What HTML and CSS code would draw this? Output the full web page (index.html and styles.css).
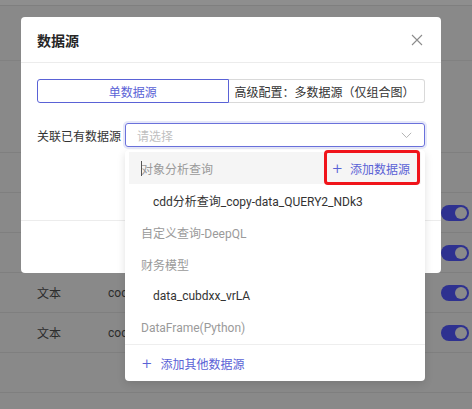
FILE: index.html
```html
<!DOCTYPE html>
<html lang="zh">
<head>
<meta charset="utf-8">
<link rel="stylesheet" href="styles.css">
</head>
<body>
<div class="page">
  <div class="bg-top"></div>
  <div class="bg-head"></div>
  <div class="bg-mid"></div>
  <div class="bg-row"><span class="c1 first">负</span></div>
  <div class="bg-row"><span class="c1"></span><span class="tog"></span></div>
  <div class="bg-row"><span class="c1"></span><span class="tog"></span></div>
  <div class="bg-row"><span class="c1">文本</span><span class="c2">coc</span><span class="tog"></span></div>
  <div class="bg-row"><span class="c1">文本</span><span class="c2">coc</span><span class="tog"></span></div>
  <div class="bg-row"></div>
  <div class="bg-last"></div>

  <div class="modal">
    <div class="modal-head">
      <span class="modal-title">数据源</span>
      <svg class="close" width="12" height="12" viewBox="0 0 12 12"><path d="M1 1L11 11M11 1L1 11" stroke="#8c8c8c" stroke-width="1.1" fill="none"/></svg>
    </div>
    <div class="modal-body">
      <div class="seg">
        <div class="seg-item active">单数据源</div>
        <div class="seg-item">高级配置：多数据源（仅组合图）</div>
      </div>
      <div class="field">
        <span class="label">关联已有数据源</span>
        <div class="select">
          <span class="ph">请选择</span>
          <svg width="11" height="7" viewBox="0 0 11 7"><path d="M0.8 0.8L5.5 5.6L10.2 0.8" stroke="#b4b4b4" stroke-width="1" fill="none"/></svg>
        </div>
      </div>
    </div>
    <div class="modal-foot"></div>
  </div>

  <div class="dropdown">
    <div class="list">
      <div class="row group hl"><span class="caret"></span>对象分析查询<span class="add"><span class="plus">+</span>添加数据源</span></div>
      <div class="row item">cdd分析查询_copy-data_QUERY2_NDk3</div>
      <div class="row group">自定义查询-DeepQL</div>
      <div class="row group">财务模型</div>
      <div class="row item">data_cubdxx_vrLA</div>
      <div class="row group">DataFrame(Python)</div>
    </div>
    <div class="dd-foot"><span class="plus">+</span>添加其他数据源</div>
  </div>
  <div class="mark"></div>
</div>
</body>
</html>
```
FILE: styles.css
```css
* { box-sizing: border-box; }
html, body { margin: 0; padding: 0; }
body {
  width: 472px; height: 409px; overflow: hidden;
  background: #898989;
  font-family: Roboto, "Noto Sans CJK SC", sans-serif;
  font-size: 12px;
  color: #333;
}
.page { position: relative; width: 472px; height: 409px; overflow: hidden; }
.bg-top { height: 6px; background: #8e8e8e; border-bottom: 1px solid #7f7f7f; }
.bg-head { height: 55px; border-bottom: 1px solid #818181; }
.bg-mid { height: 92px; border-bottom: 1px solid #7f7f7f; }
.bg-row {
  height: 40px; border-bottom: 1px solid #7f7f7f;
  display: flex; align-items: center; position: relative;
}
.bg-last { height: 16px; }
.c1 { width: 108px; padding-left: 37px; color: #2c2c2c; font-size: 12px; }
.c1.first { padding-left: 23px; }
.c2 { color: #2c2c2c; font-size: 12px; }
.tog {
  position: absolute; left: 441px; top: 12px;
  width: 28px; height: 16px; border-radius: 8px; background: #2e3190;
}
.tog::after {
  content: ""; position: absolute; right: 2px; top: 2px;
  width: 12px; height: 12px; border-radius: 50%; background: #8a8a8a;
}

.modal {
  position: absolute; left: 21px; top: 17px; width: 420px; height: 256px;
  background: #fff; border-radius: 4px;
  display: flex; flex-direction: column;
}
.modal-head {
  height: 46px; border-bottom: 1px solid #ececec;
  display: flex; align-items: center; justify-content: space-between;
  padding: 0 18px 0 16px;
}
.modal-title { font-size: 14px; font-weight: 700; color: #262626; }
.modal-body { padding: 16px 16px 0; flex: 1; }
.seg { display: flex; height: 24px; }
.seg-item {
  flex: 1; display: flex; align-items: center;
  border: 1px solid #d9d9d9; color: #333; font-size: 12px;
  padding-left: 6px;
}
.seg-item.active {
  border-color: #5a62d6; color: #5a62d6; justify-content: center;
  border-radius: 3px 0 0 3px; padding-left: 0;
}
.seg-item:last-child { border-left: none; border-radius: 0 3px 3px 0; }
.field { display: flex; align-items: center; margin-top: 20px; }
.label { width: 88px; color: #333; }
.select {
  flex: 1; height: 24px; border: 1px solid #6a71db; border-radius: 3px;
  box-shadow: 0 0 0 2px rgba(90, 98, 214, 0.15);
  display: flex; align-items: center; justify-content: space-between;
  padding: 0 12px 0 11px;
}
.ph { color: #bfbfbf; }
.modal-foot { height: 53px; border-top: 1px solid #ececec; }

.dropdown {
  position: absolute; left: 125px; top: 150px; width: 300px; height: 231px;
  background: #fff; border-radius: 4px;
  box-shadow: 0 3px 8px rgba(0,0,0,0.12);
  display: flex; flex-direction: column;
}
.list { padding: 2px 4px 0; border-bottom: 1px solid #eeeeee; }
.row {
  height: 32px; display: flex; align-items: center;
  padding-left: 12px; position: relative;
}
.row.group { color: #9a9a9a; }
.row.item { color: #333; padding-left: 24px; }
.row.hl { background: #f5f5f5; }
.caret { position: absolute; left: 12px; top: 9px; width: 1px; height: 15px; background: #555; }
.add {
  margin-left: auto; margin-right: 11px; color: #5a62d6;
  display: flex; align-items: center;
}
.plus { font-size: 17px; font-weight: 300; margin-right: 8px; line-height: 1; }
.dd-foot {
  flex: 1; display: flex; align-items: center; padding-left: 17px;
  color: #5a62d6;
}
.dd-foot .plus { margin-right: 9px; }
.mark {
  position: absolute; left: 324px; top: 150px; width: 96px; height: 35px;
  border: 3px solid #f0141a; border-radius: 4px;
}
```
